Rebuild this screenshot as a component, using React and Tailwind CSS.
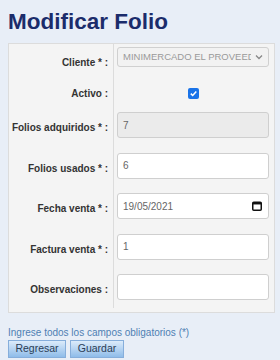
import React from 'react';

const Label = ({ children }) => (
    <div className="w-[105px] shrink-0 pr-[5px] text-right text-[10px] font-bold text-[#333] border-r border-[#dcdcdc] self-stretch flex items-center justify-end">
        {children}
    </div>
);

const CalendarIcon = () => (
    <svg width="10" height="10" viewBox="0 0 10 10" className="shrink-0">
        <rect x="0.75" y="1.25" width="8.5" height="8" rx="1" fill="none" stroke="#111" strokeWidth="1.5" />
        <rect x="0.75" y="1.25" width="8.5" height="2.2" fill="#111" />
    </svg>
);

const App = () => {
    const rows = [
        { label: 'Folios adquiridos * :', value: '7', disabled: true },
        { label: 'Folios usados * :', value: '6' },
        { label: 'Fecha venta * :', value: '19/05/2021', date: true },
        { label: 'Factura venta * :', value: '1' },
        { label: 'Observaciones :', value: '' },
    ];

    return (
        <div className="w-[280px] h-[360px] overflow-hidden bg-[#e8eef7] px-2 pt-[8px]" style={{ fontFamily: '"Liberation Sans", Arial, sans-serif' }}>
            <h1 className="text-[22.5px] leading-[27px] font-bold text-[#1b2c6b]">Modificar Folio</h1>

            <div className="mt-[8px] w-[267px] bg-[#f4f4f4] border border-[#dcdcdc]">
                {/* Cliente */}
                <div className="flex h-[37px]">
                    <Label>Cliente * :</Label>
                    <div className="flex-1 min-w-0 pl-[3px] pr-[5px] pt-[3px]">
                        <div className="h-[20px] flex items-center border border-[#d0d0d0] rounded-[3px] bg-[#f2f2f2] pl-[5px] pr-[5px]">
                            <span className="flex-1 min-w-0 overflow-hidden whitespace-nowrap text-[9.5px] text-[#9a9a9a]">MINIMERCADO EL PROVEEDOR</span>
                            <svg width="8" height="6" viewBox="0 0 8 6" className="ml-[4px] shrink-0">
                                <path d="M1 1.5 L4 4.5 L7 1.5" fill="none" stroke="#888" strokeWidth="1.3" />
                            </svg>
                        </div>
                    </div>
                </div>

                {/* Activo */}
                <div className="flex h-[24px]">
                    <Label>Activo :</Label>
                    <div className="flex-1 flex items-center justify-center pr-[2px]">
                        <span className="w-[11px] h-[11px] rounded-[2px] bg-[#1a73e8] flex items-center justify-center">
                            <svg width="9" height="9" viewBox="0 0 9 9">
                                <path d="M1.8 4.6 L3.7 6.5 L7.3 2.4" fill="none" stroke="#fff" strokeWidth="1.5" />
                            </svg>
                        </span>
                    </div>
                </div>

                {rows.map((row) => (
                    <div key={row.label} className="flex h-[40.5px]">
                        <Label><span className="pt-[5px]">{row.label}</span></Label>
                        <div className="flex-1 min-w-0 pl-[3px] pr-[5px] pt-[7.25px]">
                            <div className={`h-[26px] flex items-center border border-[#cfcfcf] rounded-[3px] pl-[5px] pr-[6px] text-[10px] text-[#666] ${row.disabled ? 'bg-[#ebebeb]' : 'bg-white'}`}>
                                <span className="flex-1">{row.value}</span>
                                {row.date && <CalendarIcon />}
                            </div>
                        </div>
                    </div>
                ))}
                <div className="h-[4px]" />
            </div>

            <p className="mt-[12px] text-[10px] leading-[15px] text-[#4f7fb3]">Ingrese todos los campos obligatorios (*)</p>

            <div className="flex gap-[4px]">
                <button className="h-[18px] w-[58px] text-[10.5px] text-[#2a3d55] border border-[#86aedb] bg-gradient-to-b from-[#dcebfa] to-[#8fbce9]">Regresar</button>
                <button className="h-[18px] w-[54px] text-[10.5px] text-[#2a3d55] border border-[#86aedb] bg-gradient-to-b from-[#dcebfa] to-[#8fbce9]">Guardar</button>
            </div>
        </div>
    );
};

export default App;
